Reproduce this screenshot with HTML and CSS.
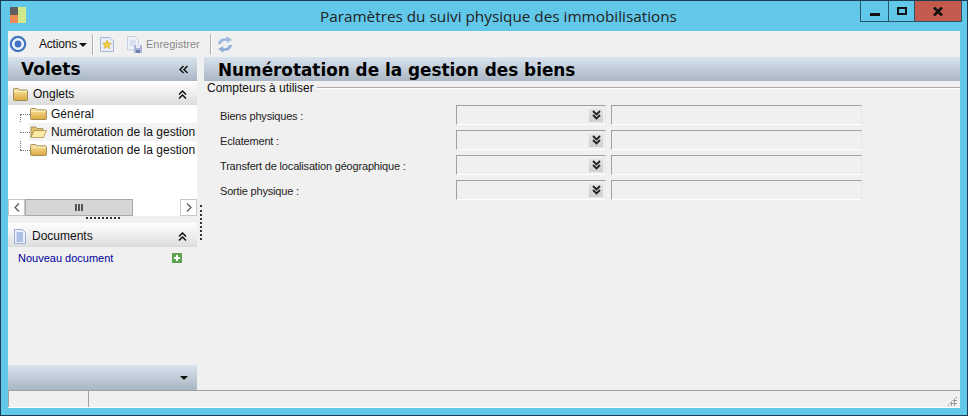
FILE: index.html
```html
<!DOCTYPE html>
<html lang="fr">
<head>
<meta charset="utf-8">
<title>Paramètres du suivi physique des immobilisations</title>
<link rel="stylesheet" href="styles.css">
</head>
<body>
<svg class="defs" width="0" height="0"><defs>
  <linearGradient id="gold" x1="0" y1="0" x2="0" y2="1"><stop offset="0" stop-color="#fbe7a2"/><stop offset="1" stop-color="#dba93f"/></linearGradient>
  <g id="folder"><path d="M.5 2V1.500Q.5.500 1.500.500H5L6.500 2H13.500Q14.500 2 14.500 3V11.500Q14.500 12.500 13.500 12.500H1.500Q.5 12.500 .5 11.500Z" fill="url(#gold)" stroke="#8f7a45" stroke-width=".8"/><path d="M1 3H14V4H1Z" fill="#fdf3cb"/></g>
</defs></svg>
<div class="window">
  <header class="titlebar">
    <svg class="app-icon" width="16" height="16" viewBox="0 0 16 16"><rect x="0" width="8" height="8" fill="#5f5f5f"/><rect x="0" y="8" width="8" height="8" fill="#f08a55"/><rect x="8" width="8" height="16" fill="#cfe88a"/></svg>
    <div class="title">Paramètres du suivi physique des immobilisations</div>
    <div class="controls">
      <div class="ctl ctl-min"><span class="min-glyph"></span></div>
      <div class="ctl ctl-max"><span class="max-glyph"></span></div>
      <div class="ctl ctl-close">
        <svg width="10" height="9" viewBox="0 0 10 9"><path d="M1 .5 9 8.500M9 .5 1 8.500" stroke="#111" stroke-width="2.600" fill="none"/></svg>
      </div>
    </div>
  </header>

  <div class="client">
    <div class="toolbar">
      <svg class="tb-logo" width="18" height="18" viewBox="0 0 18 18"><circle cx="9" cy="9" r="7.200" fill="#eef3fb" stroke="#3f74c4" stroke-width="2.200"/><circle cx="9" cy="9" r="3.400" fill="#3f74c4"/></svg>
      <span class="tb-actions">Actions</span><span class="caret"></span>
      <span class="tb-sep"></span>
      <svg class="tb-new" width="14" height="15" viewBox="0 0 14 15"><path d="M.5.500H10L13.500 4V14.500H.5Z" fill="#e8edf7" stroke="#a9b8d6"/><path d="M7 3 8.300 6 11.500 6.300 9.100 8.300 9.900 11.500 7 9.800 4.100 11.500 4.900 8.300 2.500 6.300 5.700 6Z" fill="#f2cf3a" stroke="#c79a1d" stroke-width=".5"/></svg>
      <svg class="tb-save" width="17" height="17" viewBox="0 0 17 17"><path d="M1.500.5H9L12.500 4V14H1.500Z" fill="#eef2f8" stroke="#c4cfdf"/><path d="M3.500 5H10M3.500 7H10M3.500 9H8" stroke="#c4d0e4"/><rect x="8" y="9" width="8" height="8" fill="#a9b5d8"/><rect x="10" y="9" width="4" height="3" fill="#e6ebf5"/><rect x="10" y="14" width="4" height="3" fill="#6f7fb0"/></svg>
      <span class="tb-save-label">Enregistrer</span>
      <span class="tb-sep tb-sep2"></span>
      <svg class="tb-refresh" width="16" height="17" viewBox="0 0 16 17"><path d="M1 8C1.500 4 5 1.500 9 2.500L10 .5 15 4 9.500 7 10 5C7 4 5 5.500 4 8Z" fill="#9db9dd"/><path d="M15 9C14.500 13 11 15.500 7 14.500L6 16.500 1 13 6.500 10 6 12C9 13 11 11.500 12 9Z" fill="#8fadd6"/></svg>
    </div>

    <div class="main">
      <aside class="side">
        <div class="band volets"><span>Volets</span>
          <svg class="dbl-left" width="9" height="9" viewBox="0 0 9 9"><path d="M4.500 1 1 4.500 4.500 8M8.500 1 5 4.500 8.500 8" stroke="#111" stroke-width="1.500" fill="none"/></svg>
        </div>

        <div class="pane-head">
          <svg width="15" height="13" viewBox="0 0 15 13"><use href="#folder"/></svg>
          <span class="pane-title">Onglets</span>
          <svg class="chev" width="9" height="9" viewBox="0 0 9 9"><path d="M1 4.500 4.500 1 8 4.500M1 8.500 4.500 5 8 8.500" stroke="#111" stroke-width="1.500" fill="none"/></svg>
        </div>
        <div class="tree">
          <div class="tree-line"></div>
          <div class="node"><svg width="17" height="12" viewBox="0 0 15 13" preserveAspectRatio="none"><use href="#folder"/></svg><span>Général</span></div>
          <div class="node node-open"><svg width="17" height="12" viewBox="0 0 17 12"><path d="M1 1H6L7 2.500H13V4.500H4L1 11Z" fill="#e4c06a" stroke="#8f7a45" stroke-width=".7"/><path d="M4 4.500H16.500L13.500 11.500H1Z" fill="#fbe9a6" stroke="#a58a45" stroke-width=".7"/></svg><span>Numérotation de la gestion</span></div>
          <div class="node"><svg width="17" height="12" viewBox="0 0 15 13" preserveAspectRatio="none"><use href="#folder"/></svg><span>Numérotation de la gestion</span></div>
        </div>
        <div class="hscroll">
          <span class="sb-btn"><svg width="6" height="9" viewBox="0 0 6 9"><path d="M5 .5 1 4.500 5 8.500" stroke="#555" stroke-width="1.200" fill="none"/></svg></span>
          <span class="sb-thumb"><i></i><i></i><i></i></span>
          <span class="sb-track"></span>
          <span class="sb-btn"><svg width="6" height="9" viewBox="0 0 6 9"><path d="M1 .5 5 4.500 1 8.500" stroke="#555" stroke-width="1.200" fill="none"/></svg></span>
        </div>
        <div class="grip"></div>
        <div class="pane-head">
          <svg width="14" height="15" viewBox="0 0 14 15"><path d="M1.500.5H9.500L12.500 3.500V14.500H1.500Z" fill="#eaf0fb" stroke="#9fb2d6"/><path d="M3.500 4H10M3.500 6H10M3.500 8H10M3.500 10H10M3.500 12H10" stroke="#6f8fd0"/></svg>
          <span class="pane-title pane-title-doc">Documents</span>
          <svg class="chev" width="9" height="9" viewBox="0 0 9 9"><path d="M1 4.500 4.500 1 8 4.500M1 8.500 4.500 5 8 8.500" stroke="#111" stroke-width="1.500" fill="none"/></svg>
        </div>
        <div class="doc-row">
          <span class="doc-link">Nouveau document</span>
          <svg width="10" height="10" viewBox="0 0 10 10"><rect width="10" height="10" fill="#5da34f"/><path d="M5 2V8M2 5H8" stroke="#fff" stroke-width="2"/></svg>
        </div>
        <div class="side-fill"></div>
        <div class="side-foot"><span class="foot-caret"></span></div>
      </aside>

      <div class="splitter"><span class="split-dots"></span></div>

      <section class="content">
        <div class="band heading">Numérotation de la gestion des biens</div>
        <div class="group-title"><span>Compteurs à utiliser</span><span class="group-line"></span></div>
        <div class="form">
          <label class="f-label">Biens physiques :</label>
          <div class="combo"><span class="combo-btn"><svg width="9" height="10" viewBox="0 0 9 10"><path d="M1 1 4.500 4.500 8 1M1 5 4.500 8.500 8 5" stroke="#222" stroke-width="1.800" fill="none"/></svg></span></div>
          <div class="text-box"></div>
          <label class="f-label">Eclatement :</label>
          <div class="combo"><span class="combo-btn"><svg width="9" height="10" viewBox="0 0 9 10"><path d="M1 1 4.500 4.500 8 1M1 5 4.500 8.500 8 5" stroke="#222" stroke-width="1.800" fill="none"/></svg></span></div>
          <div class="text-box"></div>
          <label class="f-label">Transfert de localisation géographique :</label>
          <div class="combo"><span class="combo-btn"><svg width="9" height="10" viewBox="0 0 9 10"><path d="M1 1 4.500 4.500 8 1M1 5 4.500 8.500 8 5" stroke="#222" stroke-width="1.800" fill="none"/></svg></span></div>
          <div class="text-box"></div>
          <label class="f-label">Sortie physique :</label>
          <div class="combo"><span class="combo-btn"><svg width="9" height="10" viewBox="0 0 9 10"><path d="M1 1 4.500 4.500 8 1M1 5 4.500 8.500 8 5" stroke="#222" stroke-width="1.800" fill="none"/></svg></span></div>
          <div class="text-box"></div>
        </div>
      </section>
    </div>

    <footer class="status">
      <span class="st-cell st-a"></span>
      <span class="st-cell st-b"></span>
      <span class="st-grip"></span>
    </footer>
  </div>
</div>
</body>
</html>
```

FILE: styles.css
```css
* { box-sizing: border-box; }
html, body { margin: 0; height: 100%; overflow: hidden; }
body { font-family: "Liberation Sans", sans-serif; font-size: 12px; color: #111; }

.window {
  width: 968px; height: 416px;
  background: #61c8ea;
  border: 1px solid #1c3f55;
  display: flex; flex-direction: column;
  position: relative;
}
.titlebar { height: 30px; flex: none; display: flex; align-items: flex-start; position: relative; }
.app-icon { margin: 6px 0 0 9px; flex: none; }
.title { position: absolute; left: 319px; top: 5px; font-family: "Open Sans", sans-serif; font-size: 15.300px; line-height: 20px; color: #222; white-space: nowrap; }
.controls { margin-left: auto; margin-right: 5px; display: flex; height: 21px; border: solid #2a5468; border-width: 0 1px 1px 1px; }
.ctl { display: flex; align-items: center; justify-content: center; height: 100%; }
.ctl-min { width: 28px; border-right: 1px solid #2a5468; }
.ctl-max { width: 26px; border-right: 1px solid #2a5468; }
.ctl-close { width: 46px; background: #c45a4d; }
.min-glyph { width: 10px; height: 3px; background: #111; margin-top: 6px; }
.max-glyph { width: 10px; height: 8px; border: 2px solid #111; }

.client { flex: 1; margin: 0 7px 7px 7px; background: #f0f0f0; display: flex; flex-direction: column; min-height: 0; }

.toolbar { height: 26px; flex: none; display: flex; align-items: center; padding-left: 1px; background: #f0f0f0; }
.tb-logo { flex: none; }
.tb-actions { margin-left: 12px; font-size: 12px; letter-spacing: -.2px; }
.caret { margin-left: 2px; margin-top: 1px; border: 4px solid transparent; border-top-color: #111; border-bottom-width: 0; }
.tb-sep { width: 1px; height: 21px; background: #b0b0b0; margin-left: 5px; box-shadow: 1px 0 0 #fff; }
.tb-new { margin-left: 7px; flex: none; }
.tb-save { margin-left: 12px; flex: none; }
.tb-save-label { margin-left: 3px; color: #8a8a8a; font-size: 11px; }
.tb-sep2 { margin-left: 10px; }
.tb-refresh { margin-left: 6px; flex: none; }

.main { flex: 1; display: flex; min-height: 0; }
.side { width: 189px; flex: none; display: flex; flex-direction: column; }
.splitter { width: 7px; flex: none; padding: 148px 0 0 3px; }
.split-dots { display: block; height: 35px; width: 2px; border-left: 2px dotted #333; }
.content { flex: 1; min-width: 0; display: flex; flex-direction: column; }

.band { background: linear-gradient(#d8e3ee, #a9b6c3); font-family: "DejaVu Sans", sans-serif; font-weight: 700; color: #000; }
.volets { height: 24px; font-size: 17px; line-height: 25px; padding: 0 9px 0 13px; display: flex; justify-content: space-between; align-items: center; }
.dbl-left { flex: none; }
.heading { height: 24px; font-size: 16.850px; line-height: 26px; padding-left: 14px; white-space: nowrap; }

.pane-head { height: 24px; flex: none; display: flex; align-items: center; padding: 2px 10px 0 5px; background: linear-gradient(#fff, #dcdcdc); }
.pane-title { margin-left: 5px; flex: 1; }
.pane-title-doc { margin-left: 5px; }
.chev { flex: none; }

.tree { height: 94px; flex: none; background: #fff; position: relative; padding-top: 0; overflow: hidden; }
.tree-line { position: absolute; left: 12px; top: 9px; height: 36px; border-left: 1px dotted #777; }
.node { height: 18px; display: flex; align-items: center; padding-left: 22px; position: relative; white-space: nowrap; letter-spacing: .03px; }
.node::before { content: ""; position: absolute; left: 12px; top: 9px; width: 10px; border-top: 1px dotted #777; }
.node svg { flex: none; margin-right: 4px; }
.node-open { background: linear-gradient(90deg, #fff 21px, #f3f3f3 21px); }

.hscroll { height: 17px; flex: none; display: flex; background: #fff; }
.sb-btn { width: 17px; flex: none; background: #fff; border: 1px solid #c8c8c8; display: flex; align-items: center; justify-content: center; }
.sb-thumb { width: 108px; flex: none; background: #d6d6d6; border: 1px solid #a8a8a8; display: flex; align-items: center; justify-content: center; gap: 1px; }
.sb-thumb i { width: 2px; height: 7px; background: #555; }
.sb-track { flex: 1; }

.grip { height: 7px; flex: none; position: relative; }
.grip::after { content: ""; position: absolute; left: 78px; top: 1px; width: 34px; height: 2px; border-top: 2px dotted #333; }

.doc-row { height: 22px; flex: none; display: flex; align-items: center; justify-content: space-between; padding: 0 15px 0 10px; }
.doc-link { color: #00009e; font-size: 11px; }
.side-fill { flex: 1; }
.side-foot { height: 25px; flex: none; background: linear-gradient(#d8e3ee, #a9b6c3); display: flex; align-items: center; justify-content: flex-end; padding-right: 9px; }
.foot-caret { border: 4px solid transparent; border-top-color: #111; border-bottom-width: 0; }

.group-title { display: flex; align-items: center; margin: 0 0 0 3px; height: 13px; font-size: 12px; }
.group-line { flex: 1; height: 2px; border-top: 1px solid #a8a8a8; border-bottom: 1px solid #fff; margin-left: 3px; }

.form { display: grid; grid-template-columns: 231px 150px 251px; column-gap: 5px; row-gap: 5px; padding: 11px 0 0 16px; align-items: start; }
.f-label { height: 20px; line-height: 22px; font-size: 11px; letter-spacing: -.18px; color: #222; white-space: nowrap; }
.combo, .text-box { height: 20px; border: 1px solid; border-color: #a0a0a0 #e8e8e8 #fff #a0a0a0; background: #f0f0f0; }
.combo { display: flex; justify-content: flex-end; align-items: center; }
.combo-btn { width: 16px; height: 15px; margin-right: 1px; background: linear-gradient(#e4e4e4, #cfcfcf); border: 1px solid #ececec; display: flex; align-items: center; justify-content: center; }

.status { height: 18px; flex: none; display: flex; border-top: 1px solid #a0a0a0; border-bottom: 1px solid #fff; position: relative; }
.st-cell { height: 100%; }
.st-a { width: 81px; border-left: 1px solid #a0a0a0; border-right: 1px solid #a0a0a0; }
.st-b { flex: 1; }
.st-grip { position: absolute; right: 3px; bottom: 1px; width: 10px; height: 10px; background-image: radial-gradient(circle, #9a9a9a 1px, transparent 1.200px); background-size: 3px 3px; clip-path: polygon(100% 0, 100% 100%, 0 100%); }

.defs { position: absolute; }
```
